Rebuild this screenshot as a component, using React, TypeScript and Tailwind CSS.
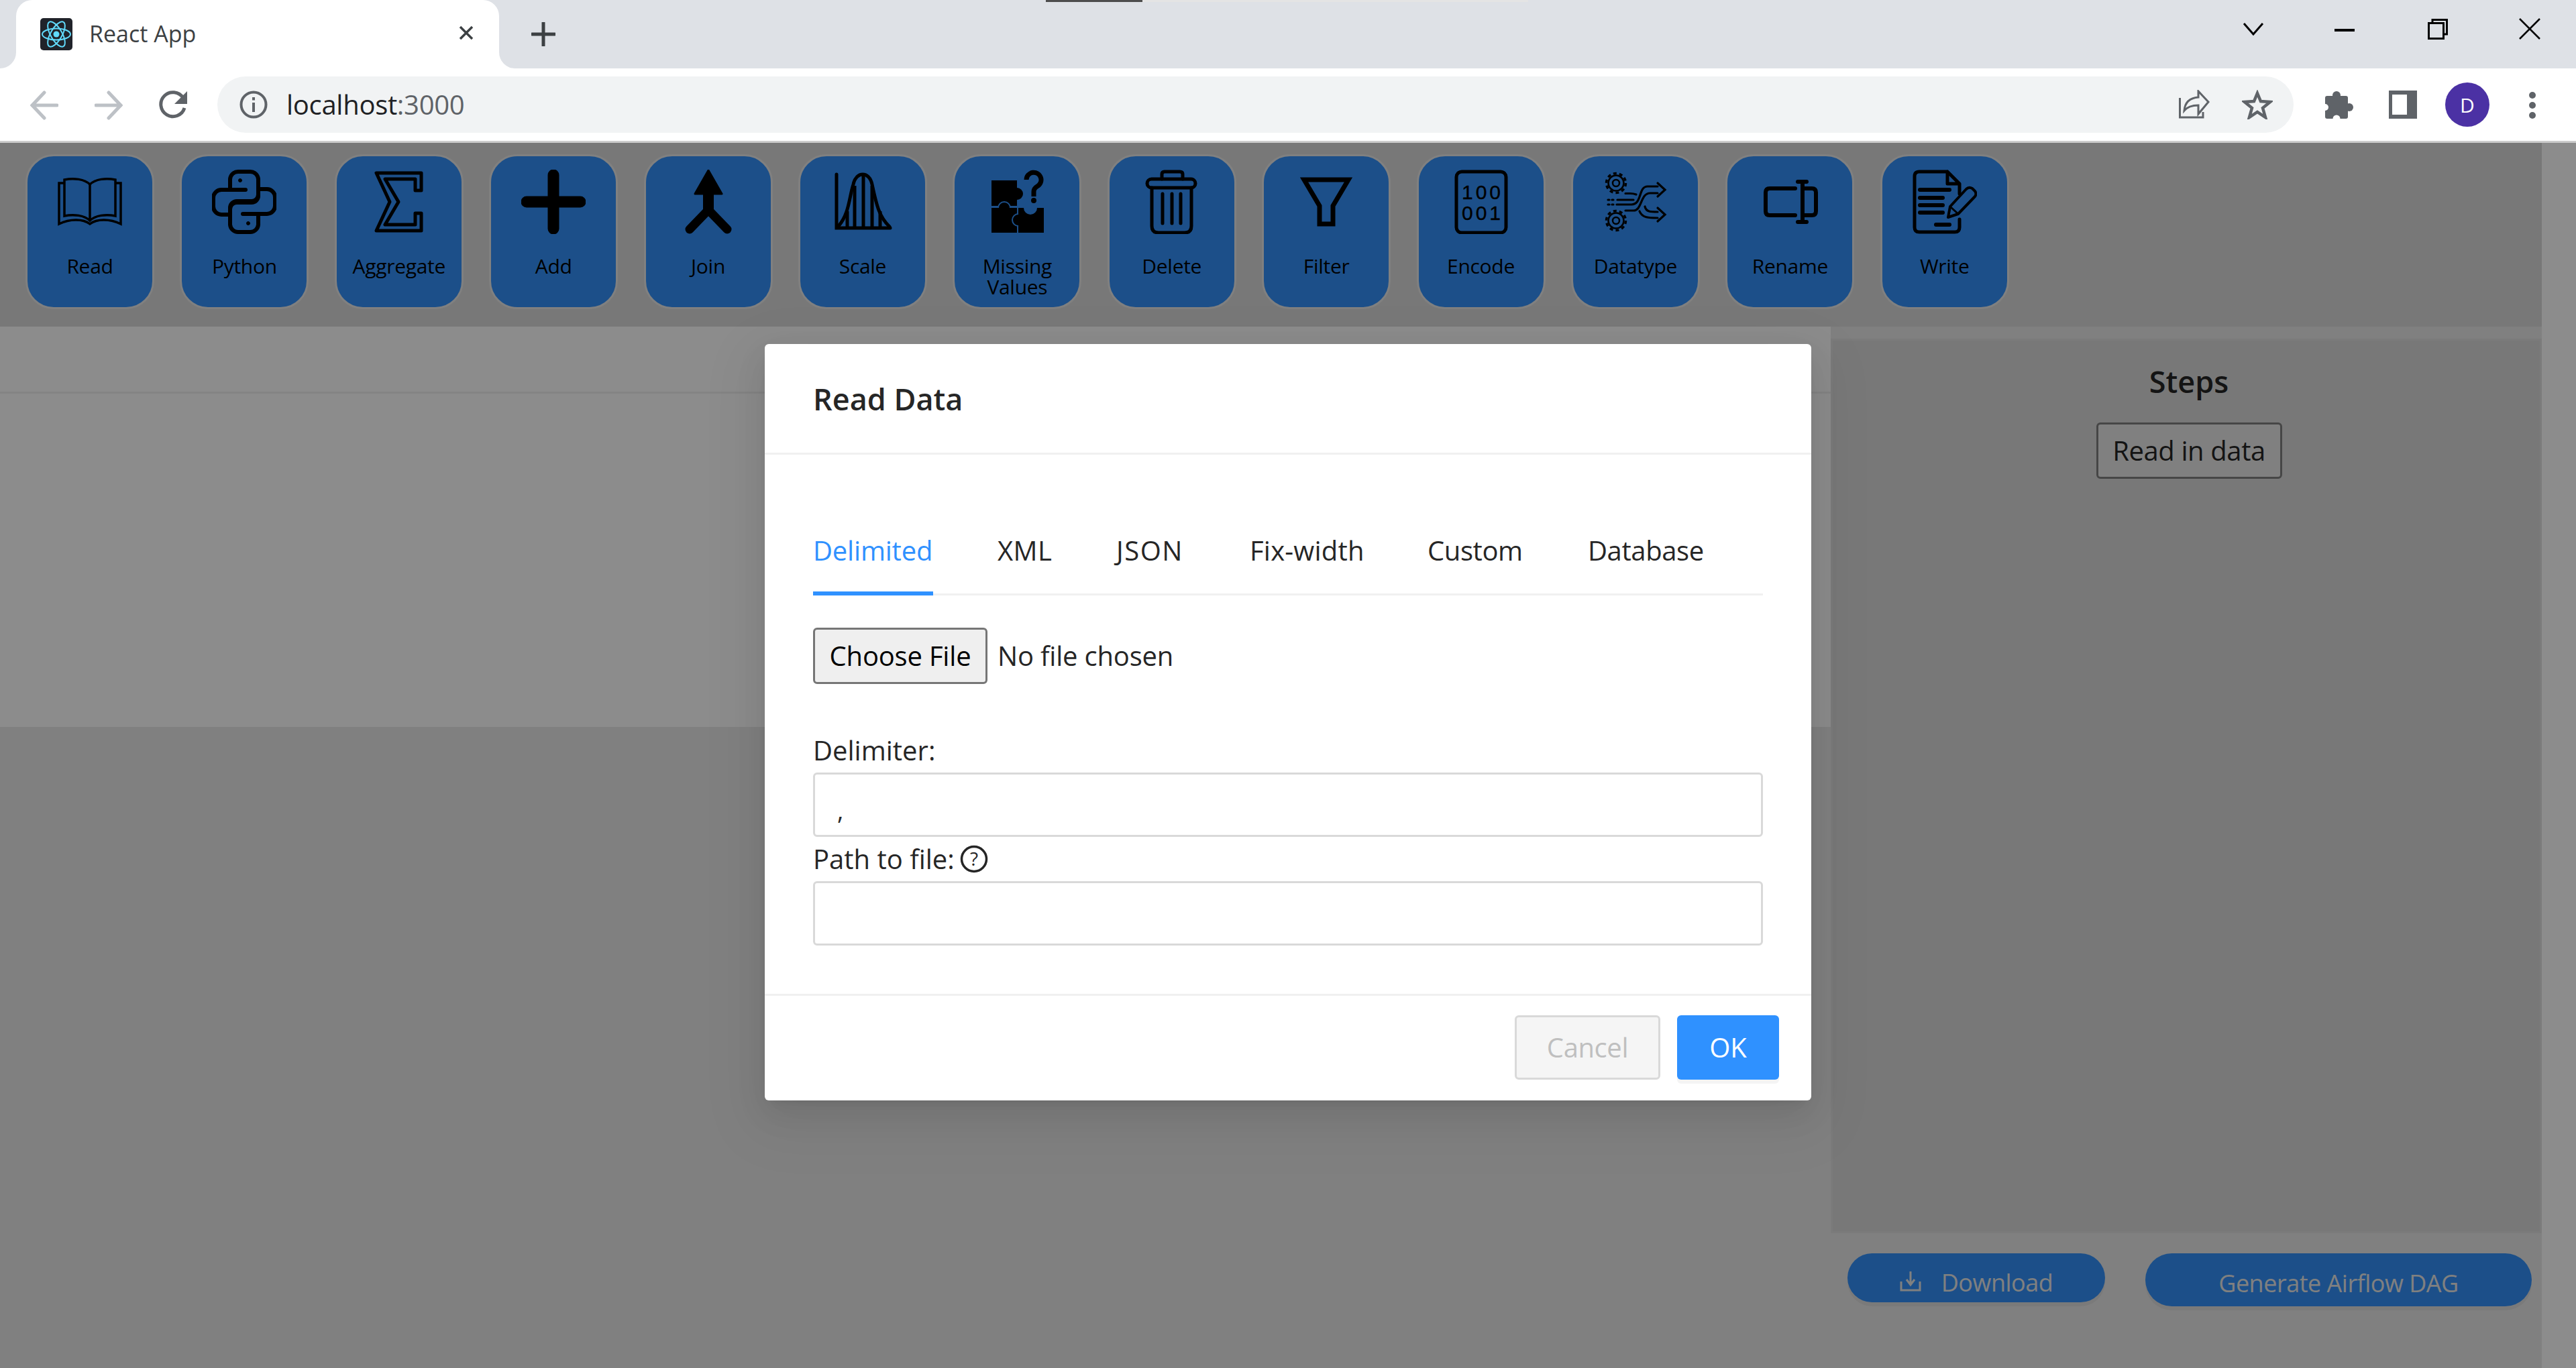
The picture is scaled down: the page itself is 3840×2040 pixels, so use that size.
import { ReactNode } from 'react';

const BLUE = '#3391f9';

function BookIcon() {
  return (
    <g fill="none" stroke="#000" strokeWidth="3.5">
      <path d="M48 22V76" />
      <path d="M48 22C40 14 24 12 10 15V69C24 66 40 68 48 76C56 68 72 66 86 69V15C72 12 56 14 48 22Z" />
      <path d="M10 20H2V81C18 73 38 73 48 81C58 73 78 73 94 81V20H86" />
    </g>
  );
}

function PythonIcon() {
  const snake =
    'M50 30H14A12 12 0 0 0 2 42V55A12 12 0 0 0 14 67H27V57A10 10 0 0 1 37 47H59A10 10 0 0 0 69 37V14A12 12 0 0 0 57 3H39A12 12 0 0 0 27 14V30';
  return (
    <g fill="none" stroke="#000" strokeWidth="6" strokeLinecap="round">
      <path d={snake} />
      <path d={snake} transform="rotate(180 48 48)" />
      <circle cx="42" cy="16" r="2.5" fill="#000" strokeWidth="1" />
      <circle cx="54" cy="80" r="2.5" fill="#000" strokeWidth="1" />
    </g>
  );
}

function SigmaIcon() {
  return (
    <path
      d="M14 5H81V31H72V14H27L47 48L27 82H72V65H81V91H14L34 48Z"
      fill="none"
      stroke="#000"
      strokeWidth="5"
      strokeLinejoin="round"
    />
  );
}

function PlusIcon() {
  return <path d="M48 8V88M8 48H88" stroke="#000" strokeWidth="17" strokeLinecap="round" />;
}

function JoinIcon() {
  return (
    <g stroke="#000" strokeLinecap="round">
      <path d="M48 1L68 36H28Z" fill="#000" strokeWidth="3" strokeLinejoin="round" />
      <path d="M48 30V60" strokeWidth="16" strokeLinecap="butt" />
      <path d="M48 60L20 89M48 60L76 89" strokeWidth="13" fill="none" />
    </g>
  );
}

function ScaleIcon() {
  return (
    <g fill="none" stroke="#000" strokeWidth="5" strokeLinecap="round">
      <path d="M9 7V87H89" />
      <path d="M12 84C28 66 28 40 34 22C36 12 42 7 48 7C54 7 60 12 62 22C68 50 72 70 88 85" />
      <path d="M25 62V85M36 24V85M49 8V85M62 24V85M74 62V85" strokeLinecap="butt" />
    </g>
  );
}

function MissingIcon() {
  return (
    <g>
      <rect x="10" y="16" width="38" height="38" />
      <circle cx="48" cy="36" r="9" />
      <circle cx="29" cy="57" r="9" stroke={BLUE} strokeWidth="2" />
      <rect x="10" y="57" width="38" height="37" />
      <circle cx="50" cy="75" r="9" stroke={BLUE} strokeWidth="2" />
      <rect x="50" y="57" width="38" height="37" />
      <circle cx="68" cy="57" r="10" fill={BLUE} />
      <path d="M62 15A11 11 0 1 1 78 25Q73 28 73 33V40" fill="none" stroke="#000" strokeWidth="7" />
      <circle cx="73" cy="46" r="4" />
    </g>
  );
}

function TrashIcon() {
  return (
    <g fill="none" stroke="#000" strokeWidth="5" strokeLinecap="round">
      <rect x="11" y="14" width="72" height="13" rx="6.5" />
      <path d="M33 14V7Q33 3 37 3H60Q64 3 64 7V14" />
      <path d="M18 27V84Q18 94 28 94H67Q77 94 77 84V27" />
      <path d="M34 36V80M48 36V80M61 36V80" />
    </g>
  );
}

function FilterIcon() {
  return (
    <path
      d="M15 15H81L58 54V81H38V54Z"
      fill="none"
      stroke="#000"
      strokeWidth="7"
    />
  );
}

function EncodeIcon() {
  return (
    <g>
      <rect x="11" y="3" width="74" height="91" rx="8" fill="none" stroke="#000" strokeWidth="5" />
      <text x="50" y="44" textAnchor="middle" fontSize="30" letterSpacing="4" fontFamily="'Liberation Sans', sans-serif" stroke="#000" strokeWidth="0.4">
        100
      </text>
      <text x="50" y="75" textAnchor="middle" fontSize="30" letterSpacing="4" fontFamily="'Liberation Sans', sans-serif" stroke="#000" strokeWidth="0.4">
        001
      </text>
    </g>
  );
}

function Gear({ y }: { y: number }) {
  return (
    <g fill="none" stroke="#000">
      <circle cx="19" cy={y} r="11.5" strokeWidth="2.5" />
      <circle cx="19" cy={y} r="14.5" strokeWidth="3.5" strokeDasharray="5 4.1" />
      <circle cx="19" cy={y} r="5" strokeWidth="2.5" />
    </g>
  );
}

function DatatypeIcon() {
  return (
    <g>
      <Gear y={20} />
      <Gear y={76} />
      <g fill="none" stroke="#000" strokeWidth="3.2" strokeLinecap="round">
        <path d="M20 52H42C58 52 52 25 66 25H81" />
        <path d="M33 61H45C58 61 55 35 70 35H81" />
        <path d="M81 20L92 30L81 40" />
        <path d="M33 35.5H40Q45 35.5 49 37" />
        <path d="M21 45H45" />
        <path d="M7 45H9M13 45H15M7 52H9M13 52H15" />
        <path d="M62 55C64 63 70 63 81 63" />
        <path d="M54 62C58 72 68 72 81 72" />
        <path d="M81 57L92 67L81 77" />
      </g>
    </g>
  );
}

function RenameIcon() {
  return (
    <g fill="none" stroke="#000" strokeWidth="6" strokeLinecap="round">
      <path d="M56 28H18Q12 28 12 34V62Q12 68 18 68H56" />
      <path d="M70 28H81Q87 28 87 34V62Q87 68 81 68H70" />
      <path d="M67 18V78" />
      <path d="M60 18H73M60 78H73" />
    </g>
  );
}

function WriteIcon() {
  return (
    <g fill="none" stroke="#000" strokeLinecap="round" strokeLinejoin="round">
      <path d="M52 3H10Q3 3 3 10V86Q3 93 10 93H63Q70 93 70 86V74M70 36V21L52 3V21H70" strokeWidth="5" />
      <path d="M11 30H55M11 42H45M11 53H45M11 64H45M35 82H55" strokeWidth="6" />
      <path d="M53 71L56 55L80 29Q84 25 89 28L93 32Q96 36 93 40L68 66Z" strokeWidth="4" />
      <path d="M57 56L67 65" strokeWidth="3" />
    </g>
  );
}

const tools: { label: string; icon: ReactNode }[] = [
  { label: 'Read', icon: <BookIcon /> },
  { label: 'Python', icon: <PythonIcon /> },
  { label: 'Aggregate', icon: <SigmaIcon /> },
  { label: 'Add', icon: <PlusIcon /> },
  { label: 'Join', icon: <JoinIcon /> },
  { label: 'Scale', icon: <ScaleIcon /> },
  { label: 'Missing Values', icon: <MissingIcon /> },
  { label: 'Delete', icon: <TrashIcon /> },
  { label: 'Filter', icon: <FilterIcon /> },
  { label: 'Encode', icon: <EncodeIcon /> },
  { label: 'Datatype', icon: <DatatypeIcon /> },
  { label: 'Rename', icon: <RenameIcon /> },
  { label: 'Write', icon: <WriteIcon /> },
];

function ToolButton({ label, icon }: { label: string; icon: ReactNode }) {
  return (
    <button
      type="button"
      className="w-[192px] h-[231px] shrink-0 flex flex-col items-center pt-[20px] px-4 rounded-[42px] border-[3px] border-[#e9e9e9] bg-[#3391f9] text-black"
    >
      <svg width="96" height="96" viewBox="0 0 96 96" className="shrink-0">
        {icon}
      </svg>
      <span className="mt-[32px] text-[30px] leading-[31px] tracking-[-0.3px]">{label}</span>
    </button>
  );
}

function TabStrip() {
  return (
    <div className="relative h-[102px] flex items-start pl-[24px] bg-[#dee1e6]">
      <div className="absolute top-0 left-[1559px] w-[144px] h-[3px] bg-[#4d4d4d]" />
      <div className="absolute top-0 left-[1703px] w-[575px] h-[3px] bg-[#e4e4e4]" />
      <div className="relative w-[720px] h-[102px] flex items-center pl-[36px] bg-white rounded-t-[24px]">
        <div className="absolute bottom-0 -left-[24px] w-[24px] h-[24px] bg-white">
          <div className="w-full h-full bg-[#dee1e6] rounded-br-[24px]" />
        </div>
        <div className="absolute bottom-0 -right-[24px] w-[24px] h-[24px] bg-white">
          <div className="w-full h-full bg-[#dee1e6] rounded-bl-[24px]" />
        </div>
        <svg width="48" height="48" viewBox="0 0 48 48" className="shrink-0">
          <rect width="48" height="48" rx="5" fill="#20232a" />
          <g fill="none" stroke="#61dafb" strokeWidth="2">
            <ellipse cx="24" cy="24" rx="21" ry="8.5" />
            <ellipse cx="24" cy="24" rx="21" ry="8.5" transform="rotate(60 24 24)" />
            <ellipse cx="24" cy="24" rx="21" ry="8.5" transform="rotate(120 24 24)" />
          </g>
          <circle cx="24" cy="24" r="4.5" fill="#61dafb" />
        </svg>
        <span className="ml-[25px] -mt-[2px] text-[34px] text-[#3c4043]">React App</span>
        <svg width="24" height="24" viewBox="0 0 24 24" className="ml-auto mr-[37px] -mt-[4px]">
          <path d="M3 3L21 21M21 3L3 21" stroke="#3c4043" strokeWidth="3.5" />
        </svg>
      </div>
      <svg width="36" height="36" viewBox="0 0 36 36" className="ml-[48px] mt-[33px]">
        <path d="M18 1V35M1 18H35" stroke="#3c4043" strokeWidth="5" strokeLinecap="round" />
      </svg>
      <div className="ml-auto flex items-start">
        <svg width="32" height="20" viewBox="0 0 32 20" className="mt-[33px]">
          <path d="M2 2L16 18L30 2" fill="none" stroke="#000" strokeWidth="3" />
        </svg>
        <svg width="32" height="4" viewBox="0 0 32 4" className="ml-[105px] mt-[43px]">
          <rect width="30" height="4" />
        </svg>
        <svg width="30" height="31" viewBox="0 0 30 31" className="ml-[107px] mt-[28px]">
          <path d="M7 6V1.5H28.5V23H24" fill="none" stroke="#000" strokeWidth="3" />
          <rect x="1.5" y="6.5" width="22" height="23" fill="none" stroke="#000" strokeWidth="3" />
        </svg>
        <svg width="32" height="32" viewBox="0 0 32 32" className="ml-[106px] mr-[53px] mt-[27px]">
          <path d="M1 1L31 31M31 1L1 31" stroke="#000" strokeWidth="2.5" />
        </svg>
      </div>
    </div>
  );
}

function AddressBar() {
  return (
    <div className="h-[111px] flex items-start bg-white border-b-[3px] border-[#cccccc]">
      <svg width="42" height="44" viewBox="0 0 42 44" className="ml-[45px] mt-[33px]">
        <path d="M40 22H3M21 3L3 22L21 41" fill="none" stroke="#bdc1c6" strokeWidth="5" strokeLinecap="round" />
      </svg>
      <svg width="42" height="44" viewBox="0 0 42 44" className="ml-[54px] mt-[33px]">
        <path d="M2 22H39M21 3L39 22L21 41" fill="none" stroke="#bdc1c6" strokeWidth="5" strokeLinecap="round" />
      </svg>
      <svg width="44" height="44" viewBox="0 0 44 44" className="ml-[53px] mt-[33px]">
        <path d="M37 11A18 18 0 1 0 39 26" fill="none" stroke="#5f6368" strokeWidth="5" />
        <path d="M43 1V20H24Z" fill="#5f6368" />
      </svg>
      <div className="ml-[44px] mt-[12px] w-[3095px] h-[84px] flex items-center rounded-full bg-[#f1f3f4]">
        <svg width="42" height="42" viewBox="0 0 42 42" className="ml-[33px] shrink-0">
          <circle cx="21" cy="21" r="18.5" fill="none" stroke="#5f6368" strokeWidth="4" />
          <rect x="19" y="18" width="4" height="14" fill="#5f6368" />
          <rect x="19" y="10" width="4" height="4.5" fill="#5f6368" />
        </svg>
        <span className="ml-[28px] text-[40px] text-[#202124] tracking-[-0.3px]">
          localhost<span className="text-[#5f6368]">:3000</span>
        </span>
        <svg width="46" height="44" viewBox="0 0 46 44" className="ml-auto shrink-0">
          <path d="M1.5 12V41H36V33" fill="none" stroke="#5f6368" strokeWidth="3" />
          <path d="M8 31C9 19 16 12 29 11V2L44 18L29 36V23C20 23 13 25 8 31Z" fill="none" stroke="#5f6368" strokeWidth="3" />
        </svg>
        <svg width="46" height="44" viewBox="0 0 46 44" className="ml-[48px] mr-[31px] shrink-0">
          <path d="M23 5L28 17L42 18L31 27L35 41L23 33L11 41L15 27L4 18L18 17Z" fill="none" stroke="#5f6368" strokeWidth="4.5" />
        </svg>
      </div>
      <svg width="42" height="42" viewBox="0 0 42 42" className="ml-[47px] mt-[33px]">
        <rect y="8" width="34" height="34" rx="3" fill="#5f6368" />
        <circle cx="17" cy="7" r="6" fill="#5f6368" />
        <circle cx="36" cy="25" r="6" fill="#5f6368" />
        <circle cx="0" cy="25" r="5" fill="#fff" />
        <circle cx="17" cy="42" r="5.5" fill="#fff" />
      </svg>
      <svg width="42" height="42" viewBox="0 0 42 42" className="ml-[53px] mt-[33px]">
        <rect width="42" height="42" fill="#5f6368" />
        <rect x="5" y="6" width="22" height="30" fill="#fff" />
      </svg>
      <div className="ml-[42px] mt-[21px] w-[66px] h-[66px] flex items-center justify-center rounded-full bg-[#4b31a4] text-white text-[30px]">
        D
      </div>
      <div className="ml-[59px] mt-[35px] flex flex-col gap-[5px]">
        <div className="w-[10px] h-[10px] rounded-full bg-[#5f6368]" />
        <div className="w-[10px] h-[10px] rounded-full bg-[#5f6368]" />
        <div className="w-[10px] h-[10px] rounded-full bg-[#5f6368]" />
      </div>
    </div>
  );
}

function Background() {
  return (
    <div className="flex h-full">
      <div className="w-[3789px] flex flex-col bg-[#e9e9e9]">
        <div className="h-[274px] pt-[17px] pl-[38px] flex gap-[38.4px] bg-[#dadada]">
          {tools.map((tool) => (
            <ToolButton key={tool.label} label={tool.label} icon={tool.icon} />
          ))}
        </div>
        <div className="flex-1 flex">
          <div className="w-[2729px] shrink-0">
            <div className="h-[597px] bg-white">
              <div className="h-[100px] border-b-[3px] border-[#f0f0f0]" />
            </div>
          </div>
          <div className="flex-1 pt-[18px] flex flex-col">
            <div className="h-[1334px] flex flex-col items-center pl-[8px] border-[3px] border-[#e1e1e1] bg-[#dadada]">
              <h2 className="mt-[28px] text-[45px] leading-[66px] font-semibold text-[#262626]">Steps</h2>
              <button
                type="button"
                className="mt-[28px] w-[277px] h-[84px] rounded-[6px] border-[3px] border-[#808080] bg-[#e9e9e9] text-[40px] text-[#262626] tracking-[-0.4px]"
              >
                Read in data
              </button>
            </div>
            <div className="mt-[30px] flex items-start">
              <button
                type="button"
                className="ml-[25px] w-[384px] h-[73px] flex items-center justify-center gap-[30px] pt-[14px] rounded-[40px] bg-[#3391f9] text-[36px] text-[#e9e9e9] shadow-[0_6px_0_rgba(0,0,0,0.045)] tracking-[-0.5px]"
              >
                <svg width="32" height="30" viewBox="0 0 32 30" className="shrink-0 -mt-[4px]">
                  <path d="M16 0V18M10 12L16 20L22 12M2 15V28H30V15" fill="none" stroke="#e9e9e9" strokeWidth="3" />
                </svg>
                Download
              </button>
              <button
                type="button"
                className="ml-[60px] w-[576px] h-[79px] pt-[10px] rounded-[40px] bg-[#3391f9] text-[36px] text-[#e9e9e9] shadow-[0_6px_0_rgba(0,0,0,0.045)] tracking-[-0.5px]"
              >
                Generate Airflow DAG
              </button>
            </div>
          </div>
        </div>
      </div>
      <div className="flex-1 bg-white" />
    </div>
  );
}

function Field({ label, value, help }: { label: string; value?: string; help?: boolean }) {
  return (
    <div>
      <div className="h-[66px] flex items-center gap-[8px] text-[40px] text-[#262626]">
        {label}
        {help && (
          <svg width="42" height="42" viewBox="0 0 42 42">
            <circle cx="21" cy="21" r="18.5" fill="none" stroke="#262626" strokeWidth="3.5" />
            <text x="21" y="31" textAnchor="middle" fontSize="28" fontFamily="'Open Sans', sans-serif" fill="#262626">
              ?
            </text>
          </svg>
        )}
      </div>
      <input
        readOnly
        value={value ?? ''}
        className="block w-full h-[96px] px-[33px] pt-[16px] rounded-[6px] border-[3px] border-[#d9d9d9] bg-white text-[36px] text-[#262626] outline-none"
      />
    </div>
  );
}

const tabs = [
  { label: 'Delimited', width: 'w-[179px]', extra: 'tracking-[-0.2px]' },
  { label: 'XML', width: 'w-[81px]', extra: 'tracking-[0.5px]' },
  { label: 'JSON', width: 'w-[103px]', extra: 'tracking-[1.5px]' },
  { label: 'Fix-width', width: 'w-[169px]', extra: 'tracking-[0.2px]' },
  { label: 'Custom', width: 'w-[143px]', extra: 'tracking-[-0.4px]' },
  { label: 'Database', width: 'w-[171px]', extra: 'tracking-[-0.4px]' },
];

function ReadDataModal() {
  return (
    <div className="absolute left-[1140px] top-[300px] w-[1560px] h-[1128px] flex flex-col rounded-[6px] bg-white shadow-[0_9px_18px_-12px_rgba(0,0,0,0.12),0_18px_48px_0_rgba(0,0,0,0.08),0_27px_84px_24px_rgba(0,0,0,0.05)]">
      <div className="h-[165px] shrink-0 flex items-center px-[72px] border-b-[3px] border-[#f0f0f0]">
        <h1 className="pt-[2px] text-[45px] font-semibold text-[#262626]">Read Data</h1>
      </div>
      <div className="flex-1 px-[72px] pt-[72px]">
        <div className="h-[138px] flex gap-[96px] border-b-[3px] border-[#f0f0f0]">
          {tabs.map((tab, i) => (
            <div
              key={tab.label}
              className={`h-[138px] flex items-center whitespace-nowrap text-[40px] ${tab.width} ${tab.extra} ${
                i === 0 ? 'text-[#2f91ff] border-b-[6px] border-[#2f91ff] pt-[10px]' : 'text-[#262626] pt-[4px]'
              }`}
            >
              {tab.label}
            </div>
          ))}
        </div>
        <div className="mt-[48px] flex items-center">
          <button
            type="button"
            className="w-[260px] h-[84px] rounded-[6px] border-[3px] border-[#767676] bg-[#efefef] text-[40px] text-black tracking-[-0.2px]"
          >
            Choose File
          </button>
          <span className="ml-[15px] text-[40px] text-[#262626] tracking-[-0.2px]">No file chosen</span>
        </div>
        <div className="mt-[66px]">
          <Field label="Delimiter:" value="," />
          <Field label="Path to file:" help />
        </div>
      </div>
      <div className="h-[159px] shrink-0 flex justify-end gap-[25px] pt-[29px] pr-[48px] border-t-[3px] border-[#f0f0f0]">
        <button
          type="button"
          className="w-[217px] h-[96px] rounded-[6px] border-[3px] border-[#d9d9d9] bg-[#f5f5f5] text-[40px] text-[#bfbfbf] tracking-[-0.4px]"
        >
          Cancel
        </button>
        <button
          type="button"
          className="w-[152px] h-[96px] rounded-[6px] bg-[#2f91ff] text-[40px] text-white shadow-[0_6px_0_rgba(0,0,0,0.045)]"
        >
          OK
        </button>
      </div>
    </div>
  );
}

export default function App() {
  return (
    <div className="w-[3840px] h-[2040px] overflow-hidden bg-white font-['Open_Sans',sans-serif]">
      <TabStrip />
      <AddressBar />
      <div className="relative h-[1827px]">
        <Background />
        <div className="absolute inset-0 bg-black/45" />
        <ReadDataModal />
      </div>
    </div>
  );
}
